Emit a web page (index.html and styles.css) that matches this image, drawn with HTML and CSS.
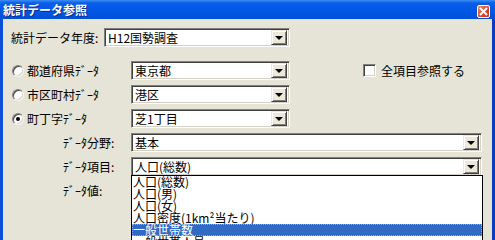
FILE: index.html
```html
<!DOCTYPE html>
<html lang="ja">
<head>
  <meta charset="UTF-8" />
  <title>統計データ参照</title>
  <link rel="stylesheet" href="styles.css">
</head>
<body>
  <div class="window">
    <div class="titlebar">
      <span class="title">統計データ参照</span>
      <span class="close-btn">
        <svg width="9" height="9" viewBox="0 0 9 9"><path d="M1 1 L8 8 M8 1 L1 8" stroke="#fff" stroke-width="2" /></svg>
      </span>
    </div>

    <div class="frame">
      <!-- year -->
      <div class="row row-year">
        <span class="label year-label">統計データ年度:</span>
        <div class="combo year-combo">
          <span class="value">H12国勢調査</span>
          <span class="drop-btn"><i></i></span>
        </div>
      </div>

      <!-- area level -->
      <div class="row">
        <label class="radio-label"><span class="radio"></span>都道府県ﾃﾞｰﾀ</label>
        <div class="combo area-combo">
          <span class="value">東京都</span>
          <span class="drop-btn"><i></i></span>
        </div>
        <label class="check-label"><span class="checkbox"></span>全項目参照する</label>
      </div>
      <div class="row">
        <label class="radio-label"><span class="radio"></span>市区町村ﾃﾞｰﾀ</label>
        <div class="combo area-combo">
          <span class="value">港区</span>
          <span class="drop-btn"><i></i></span>
        </div>
      </div>
      <div class="row">
        <label class="radio-label"><span class="radio checked"></span>町丁字ﾃﾞｰﾀ</label>
        <div class="combo area-combo">
          <span class="value">芝1丁目</span>
          <span class="drop-btn"><i></i></span>
        </div>
      </div>

      <!-- data -->
      <div class="row">
        <span class="label sub-label">ﾃﾞｰﾀ分野:</span>
        <div class="combo wide-combo">
          <span class="value">基本</span>
          <span class="drop-btn"><i></i></span>
        </div>
      </div>
      <div class="row">
        <span class="label sub-label">ﾃﾞｰﾀ項目:</span>
        <div class="combo wide-combo">
          <span class="value">人口(総数)</span>
          <span class="drop-btn"><i></i></span>
          <ul class="dropdown-list">
            <li>人口(総数)</li>
            <li>人口(男)</li>
            <li>人口(女)</li>
            <li>人口密度(1km²当たり)</li>
            <li class="selected">一般世帯数</li>
            <li>一般世帯人員</li>
          </ul>
        </div>
      </div>
      <div class="row">
        <span class="label sub-label">ﾃﾞｰﾀ値:</span>
      </div>
    </div>
  </div>
</body>
</html>
```

FILE: styles.css
```css
html, body {
  margin: 0;
  padding: 0;
  background: #e6e4d7;
  font-family: "Noto Sans CJK JP", "DejaVu Sans", sans-serif;
  font-size: 12px;
  color: #000;
}

.window {
  width: 495px;
  height: 240px;
  overflow: hidden;
  display: flex;
  flex-direction: column;
}

/* title bar */
.titlebar {
  height: 19px;
  flex: none;
  display: flex;
  align-items: center;
  justify-content: space-between;
  padding: 0 5px 0 3px;
  background: linear-gradient(to bottom, #3d8ef5 0, #0a5ee8 3px, #0058e6 10px, #004fd8 19px);
}

.title {
  color: #fff;
  font-weight: bold;
  font-size: 12px;
  line-height: 14px;
  text-shadow: 1px 1px 0 #0a2a8c;
}

.close-btn {
  width: 13px;
  height: 13px;
  margin-top: 4px;
  box-sizing: border-box;
  border: 1px solid #fff;
  border-radius: 2px;
  background: linear-gradient(135deg, #f08a6a, #d9452a 60%, #c03a20);
  display: flex;
  align-items: center;
  justify-content: center;
}

.close-btn svg {
  display: block;
}

/* body with blue side borders */
.frame {
  flex: 1;
  position: relative;
  border-left: 3px solid #0a4fd6;
  border-right: 3px solid #0a3cc0;
  padding: 9px 0 0 8px;
  background: #e6e4d7;
}

.row {
  display: flex;
  align-items: center;
  height: 19px;
  margin-bottom: 5px;
}

.row-year {
  margin-bottom: 14px;
}

.label {
  white-space: nowrap;
  line-height: 19px;
}

.year-label {
  width: 93px;
}

.sub-label {
  width: 68px;
  margin-left: 52px;
}

/* radio / checkbox */
.radio-label,
.check-label {
  display: flex;
  align-items: center;
  white-space: nowrap;
}

.radio-label {
  width: 119px;
  margin-left: 1px;
}

.radio {
  width: 12px;
  height: 12px;
  margin-right: 3px;
  box-sizing: border-box;
  border-radius: 50%;
  background: #fff;
  border: 1px solid;
  border-color: #808080 #f4f4f0 #f4f4f0 #808080;
  box-shadow: inset 1px 1px 0 #404040, inset -1px -1px 0 #d4d0c8;
  position: relative;
}

.radio.checked::after {
  content: "";
  position: absolute;
  left: 3px;
  top: 3px;
  width: 4px;
  height: 4px;
  border-radius: 50%;
  background: #000;
}

.check-label {
  margin-left: 73px;
}

.checkbox {
  width: 13px;
  height: 13px;
  margin-right: 5px;
  box-sizing: border-box;
  background: #fff;
  border: 1px solid;
  border-color: #808080 #fff #fff #808080;
  box-shadow: inset 1px 1px 0 #404040, inset -1px -1px 0 #d4d0c8;
}

/* combo boxes */
.combo {
  position: relative;
  height: 19px;
  box-sizing: border-box;
  background: #fff;
  border: 1px solid;
  border-color: #808080 #fff #fff #808080;
  box-shadow: inset 1px 1px 0 #404040, inset -1px -1px 0 #d4d0c8;
  display: flex;
  align-items: center;
  justify-content: space-between;
  padding: 0 2px 0 3px;
}

.combo .value {
  line-height: 15px;
  white-space: nowrap;
}

.year-combo {
  width: 186px;
}

.area-combo {
  width: 159px;
}

.wide-combo {
  width: 351px;
}

.drop-btn {
  width: 16px;
  height: 15px;
  box-sizing: border-box;
  background: #ece9d8;
  border: 1px solid;
  border-color: #ece9d8 #404040 #404040 #ece9d8;
  box-shadow: inset 1px 1px 0 #fff, inset -1px -1px 0 #808080;
  display: flex;
  align-items: center;
  justify-content: center;
}

.drop-btn i {
  width: 0;
  height: 0;
  border-left: 4px solid transparent;
  border-right: 4px solid transparent;
  border-top: 4px solid #000;
}

/* open list */
.dropdown-list {
  position: absolute;
  top: 100%;
  left: -1px;
  width: 352px;
  margin: 0;
  padding: 0;
  list-style: none;
  background: #fff;
  border: 1px solid #000;
  box-sizing: border-box;
  height: 80px;
  overflow: hidden;
}

.dropdown-list li {
  height: 12px;
  line-height: 12px;
  padding-left: 1px;
  white-space: nowrap;
}

.dropdown-list li.selected {
  background: #316ac5;
  color: #fff;
  outline: 1px dotted #9ab;
  outline-offset: -1px;
}
```
